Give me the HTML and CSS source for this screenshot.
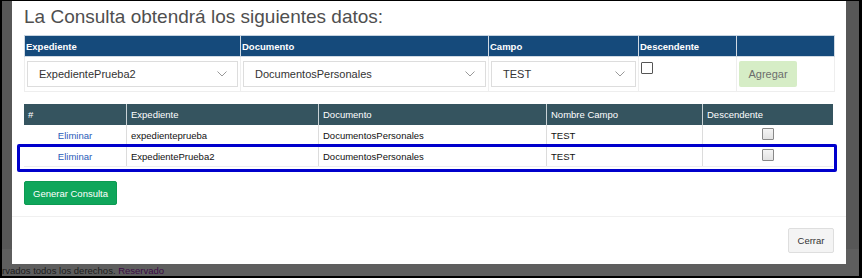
FILE: index.html
```html
<!DOCTYPE html>
<html>
<head>
<meta charset="UTF-8">
<title>Consulta</title>
<link rel="stylesheet" href="styles.css">
</head>
<body>
<div class="marco">
	<div class="modal">
		<div class="cuerpo">
			<h1 class="titulo">La Consulta obtendrá los siguientes datos:</h1>

			<table class="filtros">
				<tr>
					<th class="c1">Expediente</th>
					<th class="c2">Documento</th>
					<th class="c3">Campo</th>
					<th class="c4">Descendente</th>
					<th class="c5"></th>
				</tr>
				<tr>
					<td><div class="combo"><span>ExpedientePrueba2</span><svg width="10" height="6" viewBox="0 0 10 6"><path d="M0.5 0.5 L5 5 L9.5 0.5" fill="none" stroke="#999" stroke-width="1"/></svg></div></td>
					<td><div class="combo"><span>DocumentosPersonales</span><svg width="10" height="6" viewBox="0 0 10 6"><path d="M0.5 0.5 L5 5 L9.5 0.5" fill="none" stroke="#999" stroke-width="1"/></svg></div></td>
					<td><div class="combo"><span>TEST</span><svg width="10" height="6" viewBox="0 0 10 6"><path d="M0.5 0.5 L5 5 L9.5 0.5" fill="none" stroke="#999" stroke-width="1"/></svg></div></td>
					<td class="arriba"><span class="check"></span></td>
					<td><button class="agregar">Agregar</button></td>
				</tr>
			</table>

			<div class="resultado">
				<table class="lista">
					<tr>
						<th class="d1">#</th>
						<th class="d2">Expediente</th>
						<th class="d3">Documento</th>
						<th class="d4">Nombre Campo</th>
						<th class="d5">Descendente</th>
					</tr>
					<tr>
						<td class="centro"><a href="#">Eliminar</a></td>
						<td>expedienteprueba</td>
						<td>DocumentosPersonales</td>
						<td>TEST</td>
						<td class="centro"><span class="check gris"></span></td>
					</tr>
					<tr>
						<td class="centro"><a href="#">Eliminar</a></td>
						<td>ExpedientePrueba2</td>
						<td>DocumentosPersonales</td>
						<td>TEST</td>
						<td class="centro"><span class="check gris"></span></td>
					</tr>
				</table>
				<div class="marca"></div>
			</div>

			<button class="generar">Generar Consulta</button>
		</div>
		<div class="pie">
			<button class="cerrar">Cerrar</button>
		</div>
	</div>
	<div class="derechos">rvados todos los derechos. <span class="reservado">Reservado</span></div>
</div>
</body>
</html>
```

FILE: styles.css
```css
html, body {
	margin: 0;
	padding: 0;
}
body {
	font-family: "Liberation Sans", Arial, sans-serif;
	background: #000;
}
.marco {
	height: 275px;
	width: 857px;
	border-top: 1px solid #000;
	border-left: 2px solid #000;
	border-right: 3px solid #000;
	border-bottom: 2px solid #000;
	background: linear-gradient(#575757 0, #575757 248px, #5e5e5e 248px);
	position: relative;
}
.modal {
	margin-left: 10px;
	width: 834px;
	height: 263px;
	background: #fff;
	display: flex;
	flex-direction: column;
}
.cuerpo {
	padding: 0 11px 0 12px;
	height: 215px;
	border-bottom: 1px solid #f0f0f0;
}
.titulo {
	margin: 0;
	padding-top: 4px;
	height: 30px;
	font-size: 19px;
	font-weight: normal;
	color: #4f4f4f;
	line-height: 24px;
}

/* tabla de filtros */
.filtros {
	width: 811px;
	border-collapse: collapse;
	table-layout: fixed;
}
.filtros th {
	box-sizing: border-box;
	background: #154a7b;
	color: #fff;
	font-size: 9.5px;
	font-weight: bold;
	text-align: left;
	height: 21px;
	padding: 0 0 0 1px;
	border: 1px solid #cfd9e3;
	border-top: 1px solid #c5d3e0;
}
.filtros .c1 { width: 216px; }
.filtros .c2 { width: 248px; }
.filtros .c3 { width: 150px; }
.filtros .c4 { width: 98px; }
.filtros td {
	height: 31px;
	padding: 0 2px;
	border: 1px solid #eeeeee;
	vertical-align: middle;
}
.filtros td.arriba {
	vertical-align: top;
	padding-top: 3px;
}
.combo {
	height: 24px;
	border: 1px solid #ddd;
	display: flex;
	align-items: center;
	justify-content: space-between;
	padding: 0 10px 0 11px;
	font-size: 11px;
	color: #333;
}
.check {
	display: inline-block;
	width: 10px;
	height: 10px;
	border: 1px solid #555;
	background: #fff;
	border-radius: 1px;
}
.check.gris {
	border-color: #888;
	background: linear-gradient(#f4f4f4, #e2e2e2);
}
.agregar {
	width: 58px;
	height: 26px;
	border: none;
	border-radius: 2px;
	background: #d6edc6;
	color: #6d6d6d;
	font-family: inherit;
	font-size: 11px;
	padding: 0;
}

/* tabla resultado */
.resultado {
	position: relative;
	margin-top: 12px;
}
.lista {
	width: 809px;
	border-collapse: collapse;
	table-layout: fixed;
}
.lista th {
	background: #35545f;
	color: #fff;
	font-size: 9.5px;
	font-weight: normal;
	text-align: left;
	height: 21px;
	padding: 0 4px;
	border-left: 1px solid #c9d2d6;
}
.lista th:first-child {
	border-left: none;
}
.lista .d1 { width: 94px; }
.lista .d2 { width: 183px; }
.lista .d3 { width: 219px; }
.lista .d4 { width: 147px; }
.lista td {
	height: 20px;
	padding: 0 4px;
	font-size: 9.5px;
	color: #111;
	border-left: 1px solid #dcdcdc;
	border-bottom: 1px solid #eee;
}
.lista td:first-child {
	border-left: none;
}
.lista td.centro {
	text-align: center;
}
.lista a {
	color: #2a5bb8;
	text-decoration: none;
}
.marca {
	position: absolute;
	left: -7px;
	top: 40px;
	width: 814px;
	height: 22px;
	border: 3px solid #0000cc;
	border-radius: 2px;
}
.generar {
	margin-top: 14px;
	width: 93px;
	height: 24px;
	border: 1px solid #0c9a52;
	border-radius: 2px;
	background: #0fa65b;
	color: #fff;
	font-family: inherit;
	font-size: 9.5px;
	padding: 0;
}

.pie {
	flex: 1;
	display: flex;
	justify-content: flex-end;
	align-items: center;
	padding-right: 12px;
}
.cerrar {
	width: 46px;
	height: 25px;
	border: 1px solid #dedede;
	border-radius: 2px;
	background: #f4f4f4;
	color: #333;
	font-family: inherit;
	font-size: 9.5px;
	padding: 0;
}
.derechos {
	font-size: 9.5px;
	color: #1c1c1c;
	padding-left: 0;
	line-height: 11px;
	margin-top: 1px;
}
.reservado {
	color: #3b0a45;
}
```
